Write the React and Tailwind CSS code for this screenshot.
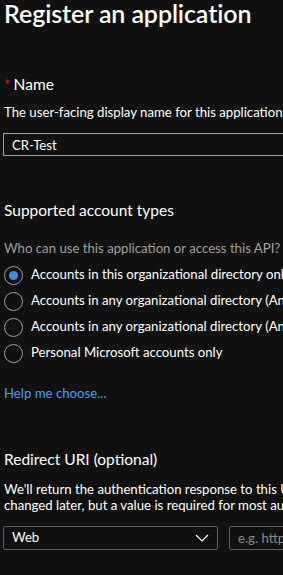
import { useState } from "react";

const accountTypes = [
    "Accounts in this organizational directory only (Contoso only - Single tenant)",
    "Accounts in any organizational directory (Any Microsoft Entra ID tenant - Multitenant)",
    "Accounts in any organizational directory (Any Microsoft Entra ID tenant - Multitenant) and personal Microsoft accounts",
    "Personal Microsoft accounts only",
];

const Radio = ({ checked }) => (
    <span className="flex h-[19px] w-[19px] shrink-0 items-center justify-center rounded-full border border-[#a19f9d]">
        {checked && <span className="h-[9px] w-[9px] rounded-full bg-[#3c8fe8]" />}
    </span>
);

const App = () => {
    const [name, setName] = useState("CR-Test");
    const [selected, setSelected] = useState(0);

    return (
        <div className="h-screen w-full overflow-hidden bg-[#111111] text-white font-['Segoe_UI','Lato',sans-serif]">
            <div className="w-[700px] pl-[4px]">
                <h1 className="text-[25px] leading-[32px] font-semibold tracking-[-0.1px] -mt-[3px]">Register an application</h1>

                <h2 className="mt-[45px] text-[15.5px] leading-[20px]">
                    <span className="text-[#e81123] mr-[3px]">*</span>Name
                </h2>
                <p className="mt-[9px] text-[13.2px] leading-[18px]">
                    The user-facing display name for this application (this can be changed later).
                </p>
                <input
                    value={name}
                    onChange={(e) => setName(e.target.value)}
                    className="mt-[12px] -ml-[1px] block h-[23px] w-[600px] border border-[#69afe5] bg-transparent px-[8px] text-[13.2px] text-white outline-none"
                />

                <h2 className="mt-[44px] text-[15.5px] leading-[20px]">Supported account types</h2>
                <p className="mt-[19px] text-[13.2px] leading-[18px] text-[#a19f9d]">
                    Who can use this application or access this API?
                </p>
                <div className="mt-[5px] flex flex-col">
                    {accountTypes.map((label, i) => (
                        <label
                            key={label}
                            onClick={() => setSelected(i)}
                            className="flex h-[26px] items-center gap-[8px] text-[13.2px] whitespace-nowrap"
                        >
                            <Radio checked={selected === i} />
                            {label}
                        </label>
                    ))}
                </div>

                <a href="#" className="mt-[18px] block text-[13.2px] leading-[18px] text-[#479ef5]">
                    Help me choose...
                </a>

                <h2 className="mt-[47px] text-[15.5px] leading-[20px]">Redirect URI (optional)</h2>
                <p className="mt-[12px] whitespace-nowrap text-[13.2px] leading-[16px]">
                    We'll return the authentication response to this URI after successfully authenticating the user. Providing this now is optional and it can be
                    <br />
                    changed later, but a value is required for most authentication scenarios.
                </p>
                <div className="mt-[13px] flex gap-[11px]">
                    <button className="-ml-[1px] flex h-[24px] w-[215px] items-center justify-between rounded-[2px] border border-[#605e5c] px-[8px] text-[13.2px]">
                        <span>Web</span>
                        <svg width="14" height="8" viewBox="0 0 14 8" fill="none" stroke="#ffffff" strokeWidth="1.2">
                            <path d="M1 1l6 6 6-6" />
                        </svg>
                    </button>
                    <input
                        placeholder="e.g. https://example.com/auth"
                        className="h-[24px] w-[300px] rounded-[2px] border border-[#605e5c] bg-transparent px-[8px] text-[13.2px] text-white placeholder-[#8a8886] outline-none"
                    />
                </div>
            </div>
        </div>
    );
};

export default App;
